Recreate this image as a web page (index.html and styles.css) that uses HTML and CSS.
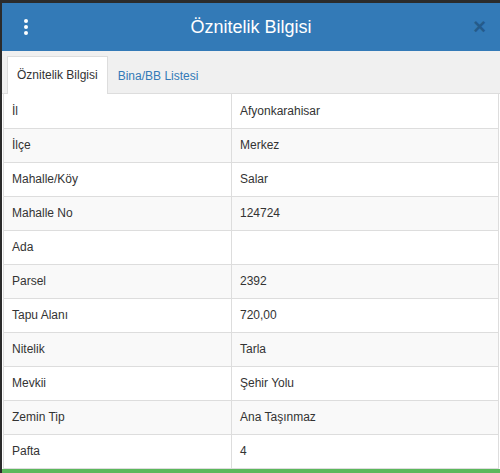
FILE: index.html
```html
<!DOCTYPE html>
<html>
<head>
<meta charset="utf-8">
<link rel="stylesheet" href="styles.css">
</head>
<body>
<div class="panel">
  <div class="header">
    <span class="menu"><i></i><i></i><i></i></span>
    <div class="title">Öznitelik Bilgisi</div>
    <span class="close">×</span>
  </div>
  <div class="tabs">
    <div class="tab active">Öznitelik Bilgisi</div>
    <div class="tab">Bina/BB Listesi</div>
  </div>
  <table class="attrs">
    <tr><td>İl</td><td>Afyonkarahisar</td></tr>
    <tr><td>İlçe</td><td>Merkez</td></tr>
    <tr><td>Mahalle/Köy</td><td>Salar</td></tr>
    <tr><td>Mahalle No</td><td>124724</td></tr>
    <tr><td>Ada</td><td></td></tr>
    <tr><td>Parsel</td><td>2392</td></tr>
    <tr><td>Tapu Alanı</td><td>720,00</td></tr>
    <tr><td>Nitelik</td><td>Tarla</td></tr>
    <tr><td>Mevkii</td><td>Şehir Yolu</td></tr>
    <tr><td>Zemin Tip</td><td>Ana Taşınmaz</td></tr>
    <tr><td>Pafta</td><td>4</td></tr>
  </table>
  <div class="footer"></div>
</div>
</body>
</html>
```
FILE: styles.css
```css
html, body {
  margin: 0;
  padding: 0;
  background: #2b2b2b;
  width: 500px;
  height: 473px;
  overflow: hidden;
  font-family: "Liberation Sans", Arial, sans-serif;
}
.panel {
  margin: 3px 0 0 2px;
  width: 498px;
  height: 470px;
  background: #fff;
  display: flex;
  flex-direction: column;
}
.header {
  height: 48px;
  flex: none;
  background: #337ab7;
  display: flex;
  align-items: center;
  position: relative;
}
.menu {
  width: 48px;
  display: flex;
  flex-direction: column;
  align-items: center;
  gap: 2px;
}
.menu i {
  display: block;
  width: 4px;
  height: 4px;
  border-radius: 50%;
  background: #fff;
}
.title {
  flex: 1;
  text-align: center;
  color: #fff;
  font-size: 18px;
  margin-right: 48px;
  padding-top: 1px;
}
.close {
  position: absolute;
  right: 14px;
  top: 13px;
  color: #1f4e79;
  opacity: 0.7;
  font-size: 22px;
  font-weight: bold;
  line-height: 22px;
}
.tabs {
  flex: none;
  background: #f0f0f0;
  height: 43px;
  display: flex;
  align-items: flex-end;
  padding-left: 5px;
  border-bottom: 1px solid #ddd;
  box-sizing: border-box;
}
.tab {
  height: 37px;
  box-sizing: border-box;
  padding: 11px 9px 0 9px;
  font-size: 12px;
  color: #337ab7;
  border: 1px solid transparent;
  border-bottom: none;
  margin-bottom: -1px;
}
.tab.active {
  background: #fff;
  color: #333;
  border-color: #ddd;
  height: 38px;
}
.attrs {
  flex: none;
  border-collapse: collapse;
  width: 496px;
  margin-left: 1px;
  font-size: 12px;
  color: #333;
}
.attrs td {
  height: 34px;
  padding: 0 0 0 8px;
  border: 1px solid #ddd;
  border-top: none;
  box-sizing: border-box;
}
.attrs td:first-child {
  width: 228px;
}
.attrs tr:nth-child(even) td {
  background: #f9f9f9;
}
.footer {
  flex: 1;
  background: #fff;
  border-bottom: 4px solid #5cb85c;
}
```
